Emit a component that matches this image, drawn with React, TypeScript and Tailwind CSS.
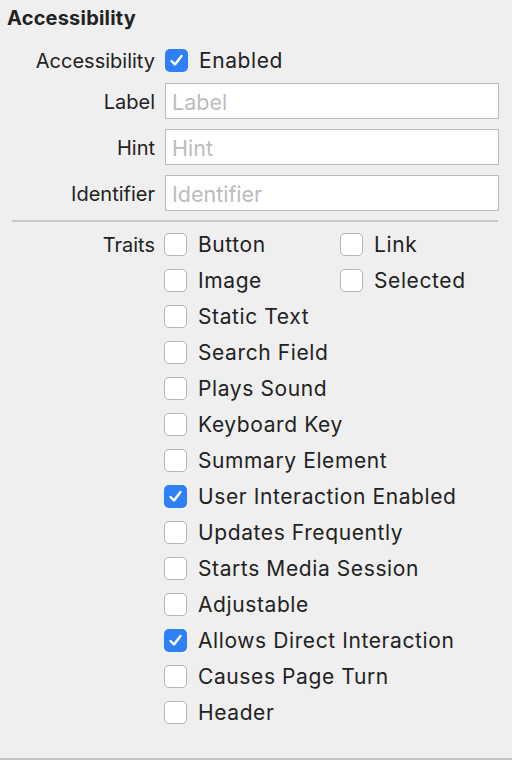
import React from "react";

const Check = ({ checked }: { checked?: boolean }) =>
  checked ? (
    <div className="w-[23px] h-[23px] rounded-[5px] bg-[#2f7ff7] flex items-center justify-center shrink-0">
      <svg width="15" height="15" viewBox="0 0 15 15">
        <path d="M2.5 8 L6 11.5 L12.5 3" fill="none" stroke="white" strokeWidth="2.4" strokeLinecap="round" strokeLinejoin="round" />
      </svg>
    </div>
  ) : (
    <div className="w-[23px] h-[23px] rounded-[5px] bg-white border border-[#b5b5b5] shrink-0" />
  );

const Item = ({ label, checked }: { label: string; checked?: boolean }) => (
  <div className="flex items-center h-[24px] gap-[11px]">
    <Check checked={checked} />
    <span className="h-[24px] pt-[1px] text-[21px] leading-[24px] tracking-[0.6px] text-[#222] whitespace-nowrap">{label}</span>
  </div>
);

const Field = ({ label }: { label: string }) => (
  <>
    <div className="h-[36px] text-right text-[20px] leading-[38px] text-[#222]">{label}</div>
    <div className="h-[36px] bg-white border border-[#bdbdbd] pl-[6px] text-[21.5px] leading-[36px] text-[#bcbcbc]">
      {label}
    </div>
  </>
);

export default function App() {
  const rest: [string, boolean?][] = [
    ["Static Text"],
    ["Search Field"],
    ["Plays Sound"],
    ["Keyboard Key"],
    ["Summary Element"],
    ["User Interaction Enabled", true],
    ["Updates Frequently"],
    ["Starts Media Session"],
    ["Adjustable"],
    ["Allows Direct Interaction", true],
    ["Causes Page Turn"],
    ["Header"],
  ];
  return (
    <div
      className="w-[512px] h-[760px] bg-[#efefef] border-b-2 border-[#c4c4c4] overflow-hidden"
      style={{ fontFamily: "Inter, 'Open Sans', sans-serif" }}
    >
      <div className="pt-[6px] pl-[7px] text-[20px] leading-[24px] tracking-[0.2px] font-bold text-[#222]">Accessibility</div>
      <div className="mt-[18px] grid grid-cols-[155px_334px] gap-x-[10px] gap-y-[10px]">
        <div className="h-[24px] text-right text-[20px] leading-[26px] text-[#222]">Accessibility</div>
        <Item label="Enabled" checked />
      </div>
      <div className="mt-[11px] grid grid-cols-[155px_334px] gap-x-[10px] gap-y-[10px]">
        <Field label="Label" />
        <Field label="Hint" />
        <Field label="Identifier" />
      </div>
      <div className="mt-[9px] ml-[12px] w-[486px] h-[2px] bg-[#c8c8c8]" />
      <div className="mt-[10px] grid grid-cols-[155px_1fr] gap-x-[9px]">
        <div className="h-[24px] text-right text-[20px] leading-[26px] text-[#222]">Traits</div>
        <div className="flex flex-col gap-[12px]">
          <div className="grid grid-cols-[176px_1fr]">
            <Item label="Button" />
            <Item label="Link" />
          </div>
          <div className="grid grid-cols-[176px_1fr]">
            <Item label="Image" />
            <Item label="Selected" />
          </div>
          {rest.map(([l, c]) => (
            <Item key={l} label={l} checked={c} />
          ))}
        </div>
      </div>
    </div>
  );
}
